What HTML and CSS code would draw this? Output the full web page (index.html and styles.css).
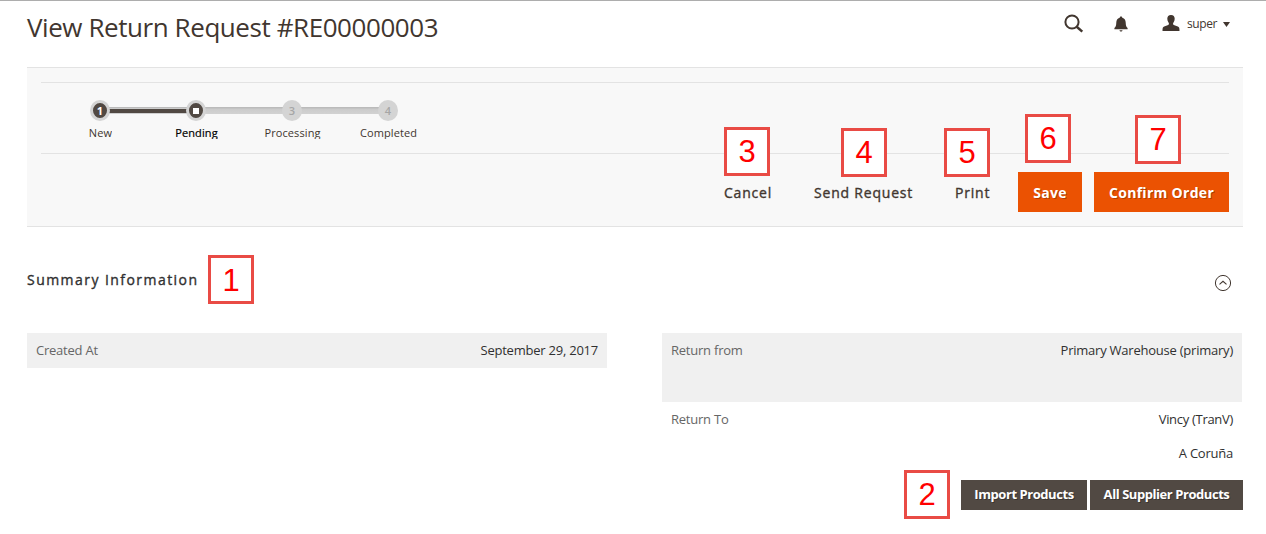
FILE: index.html
```html
<!DOCTYPE html>
<html lang="en">
<head>
<meta charset="utf-8">
<title>View Return Request #RE00000003</title>
<link rel="stylesheet" href="styles.css">
</head>
<body>
<div class="page">
  <header class="header">
    <h1 class="title">View Return Request #RE00000003</h1>
    <div class="tools">
      <svg class="search" width="20" height="20" viewBox="0 0 20 20"><circle cx="8" cy="8" r="6.6" fill="none" stroke="#41362f" stroke-width="2"/><path d="M12.7 12.7 18.3 17.6" stroke="#41362f" stroke-width="2.5"/></svg>
      <svg class="bell" width="14" height="16" viewBox="0 0 14 16"><path d="M7 0.5C7.8.5 8.2 1 8.3 1.700 10.800 2.400 11.600 4.300 11.700 6.500c.1 2.700.3 4.300 1.900 5.500v1.200H.4v-1.200C2 10.800 2.200 9.200 2.300 6.500 2.400 4.300 3.200 2.400 5.700 1.700 5.800 1 6.200.5 7 .5ZM5.500 14.200h3c-.2 1-.7 1.300-1.500 1.300s-1.300-.3-1.500-1.300Z" fill="#41362f"/></svg>
      <svg class="person" width="18" height="16" viewBox="0 0 18 16"><path d="M9 0c2.500 0 3.700 1.500 3.700 3.800 0 1.500-.4 2.800-1.200 3.800-.7.900-.6 2 .3 2.500l4 1.300c1.400.6 1.700 1.400 1.700 4.600H.5c0-3.200.3-4 1.700-4.600l4-1.300c.9-.5 1-1.600.3-2.500C5.700 6.600 5.300 5.300 5.300 3.800 5.300 1.500 6.500 0 9 0Z" fill="#41362f"/></svg>
      <span class="user">super</span>
      <svg class="caret" width="7" height="5" viewBox="0 0 7 5"><path d="M0 0h7L3.500 5Z" fill="#41362f"/></svg>
    </div>
  </header>

  <section class="panel">
    <div class="progress">
      <div class="step done"><span class="dot"><i>1</i></span><span class="label">New</span></div>
      <div class="step active"><span class="dot"><i></i></span><span class="label">Pending</span></div>
      <div class="step"><span class="dot"><i>3</i></span><span class="label">Processing</span></div>
      <div class="step"><span class="dot"><i>4</i></span><span class="label">Completed</span></div>
    </div>
    <div class="actions">
      <span class="link cancel">Cancel</span>
      <span class="link send">Send Request</span>
      <span class="link print">Print</span>
      <span class="button save">Save</span>
      <span class="button confirm">Confirm Order</span>
    </div>
  </section>

  <div class="section-head">
    <h2 class="section-title">Summary Information</h2>
    <svg width="18" height="18" viewBox="0 0 18 18" fill="none" stroke="#41362f"><circle cx="9" cy="9" r="7.600" stroke-width="1"/><path d="M5.500 10.400 9 7.300l3.500 3.100" stroke-width="1.100"/></svg>
  </div>

  <div class="columns">
    <div class="table">
      <div class="row shaded"><span class="name">Created At</span><span class="value">September 29, 2017</span></div>
    </div>
    <div class="table">
      <div class="row shaded tall"><span class="name">Return from</span><span class="value">Primary Warehouse (primary)</span></div>
      <div class="row"><span class="name">Return To</span><span class="value vendor">Vincy (TranV)</span></div>
      <div class="row"><span class="name"></span><span class="value">A Coruña</span></div>
    </div>
  </div>
  <div class="footer-buttons">
    <span class="dark import">Import Products</span>
    <span class="dark supplier">All Supplier Products</span>
  </div>

  <div class="marker m1">1</div>
  <div class="marker m2">2</div>
  <div class="marker m3">3</div>
  <div class="marker m4">4</div>
  <div class="marker m5">5</div>
  <div class="marker m6">6</div>
  <div class="marker m7">7</div>
</div>
</body>
</html>
```

FILE: styles.css
```css
* { box-sizing: border-box; }
body { margin: 0; background: #fff; color: #303030; font-family: "Open Sans", "Noto Sans", sans-serif; }
.page { position: relative; width: 1266px; height: 534px; overflow: hidden; border-top: 1px solid #adadad; padding: 0 23px 0 27px; }

.header { display: flex; justify-content: space-between; height: 66px; }
.title { margin: 7px 0 0; font-size: 26px; line-height: 38px; font-weight: 400; letter-spacing: -.43px; color: #41362f; white-space: nowrap; }
.tools { display: flex; align-items: flex-start; padding-right: 13px; color: #41362f; }
.search { margin: 13px 30px 0 0; }
.bell { margin: 15px 34px 0 0; }
.person { margin: 14px 7px 0 0; }
.user { font-size: 12px; line-height: 20px; letter-spacing: -.4px; margin: 13px 6px 0 0; }
.caret { margin-top: 21px; }

.panel { height: 160px; background: #f8f8f8; border-top: 1px solid #e3e3e3; border-bottom: 1px solid #e3e3e3; padding: 14px 14px 0; }
.progress { display: flex; height: 72px; border-top: 1px solid #e3e3e3; border-bottom: 1px solid #e3e3e3; padding: 17px 0 0 11px; }
.step { width: 96px; display: flex; flex-direction: column; align-items: center; }
.dot { width: 100%; height: 21px; display: flex; align-items: center; justify-content: center; background: linear-gradient(#bbb 0 1px, #cbcbcb 2px, #d2d2d2 7px) 0 7px / 100% 7px no-repeat; }
.step:first-child .dot { background-image: linear-gradient(#bbb 0 1px, #cbcbcb 1px 2px, #514943 2px 6px, #d0d0d0 6px); background-size: 48px 7px; background-position: 48px 7px; }
.step.active .dot { background-image: linear-gradient(#bbb 0 1px, #cbcbcb 1px 2px, #514943 2px 6px, #d0d0d0 6px), linear-gradient(#bbb 0 1px, #cbcbcb 2px, #d2d2d2 7px); background-size: 48px 7px, 48px 7px; background-position: 0 7px, 48px 7px; }
.step:last-child .dot { background-size: 48px 7px; }
.dot i { width: 20px; height: 21px; border-radius: 50%; background: #d4d4d4; color: #a6a6a6; font: 600 11px/22px "Open Sans", sans-serif; text-align: center; }
.done .dot i { background: #514943; border: 3px solid #d4d4d4; color: #fff; font-weight: 700; line-height: 15px; }
.active .dot i { border: 3px solid #d4d4d4; background: linear-gradient(#fff, #fff) center / 6px 6px no-repeat #514943; }
.label { height: 14px; margin-top: 4px; overflow: hidden; font-size: 11px; line-height: 15px; color: #41362f; letter-spacing: .1px; padding-left: 1px; }
.active .label { color: #000; -webkit-text-stroke: .2px #000; }

.actions { display: flex; height: 40px; margin-top: 18px; justify-content: flex-end; line-height: 41px; font-size: 14px; white-space: nowrap; }
.link { letter-spacing: .8px; color: #41362f; -webkit-text-stroke: .35px #41362f; }
.cancel { width: 90px; }
.send { width: 141px; }
.print { width: 63px; }
.button { background: #eb5202; color: #fff; font-weight: 700; letter-spacing: .3px; text-align: center; text-shadow: 1px 1px 0 rgba(0,0,0,.25); }
.save { width: 64px; margin-right: 12px; }
.confirm { width: 135px; }

.section-head { display: flex; justify-content: space-between; align-items: flex-start; height: 106px; padding: 42px 11px 0 0; }
.section-title { margin: 0; font-size: 14px; line-height: 22px; font-weight: 400; letter-spacing: 1.45px; -webkit-text-stroke: .35px #303030; }
.section-head svg { margin-top: 5px; }

.columns { display: flex; gap: 55px; height: 137px; }
.table { width: 580px; font-size: 13px; letter-spacing: -.23px; }
.row { display: flex; justify-content: space-between; height: 34px; padding: 0 9px; line-height: 35px; }
.shaded { background: #f0f0f0; height: 35px; }
.shaded.tall { height: 69px; }
.name { color: #666; }
.vendor { letter-spacing: -.3px; }

.footer-buttons { display: flex; justify-content: flex-end; gap: 3px; margin: 10px 0 0; }
.dark { height: 30px; line-height: 29px; background: #514943; color: #fff; font-size: 13px; font-weight: 700; letter-spacing: -.44px; text-align: center; white-space: nowrap; text-shadow: 1px 1px 0 rgba(0,0,0,.3); }
.import { width: 126px; }
.supplier { width: 153px; }

/* Numbered callouts laid over the screen */
.marker { position: absolute; width: 46px; height: 49px; border: 3px solid #e94b45; background: #fff; color: #f00; font: 31px/43px "Liberation Sans", Arial, sans-serif; text-align: center; }
.m1 { left: 208px; top: 254px; line-height: 45px; }
.m2 { left: 904px; top: 469px; }
.m3 { left: 724px; top: 126px; line-height: 44px; }
.m4 { left: 841px; top: 127px; }
.m5 { left: 944px; top: 127px; }
.m6 { left: 1025px; top: 113px; }
.m7 { left: 1135px; top: 114px; }
```
